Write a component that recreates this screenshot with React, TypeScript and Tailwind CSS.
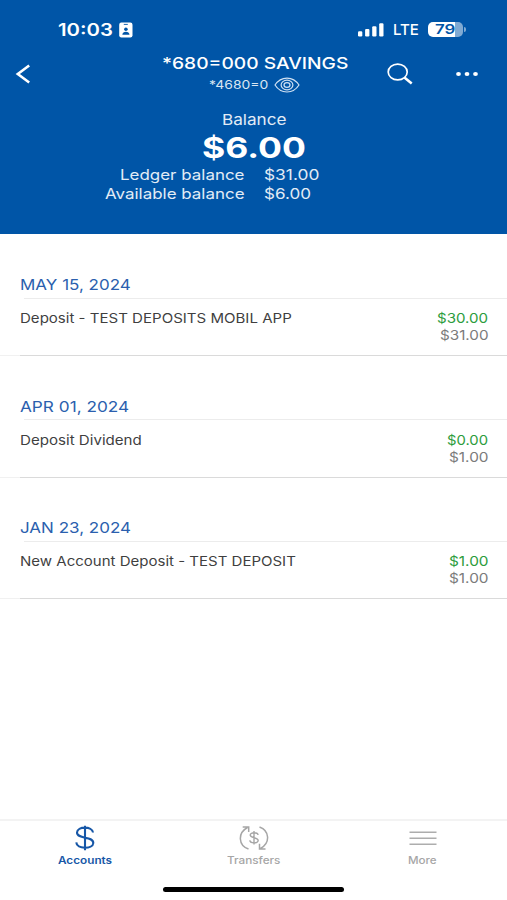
import { useLayoutEffect, useRef } from "react";
import type { ReactNode } from "react";

/* One line of extended type: stretched horizontally to fill the width of its box. */
function Wide({ className, children }: { className: string; children: ReactNode }) {
  const box = useRef<HTMLSpanElement>(null);
  const text = useRef<HTMLSpanElement>(null);
  useLayoutEffect(() => {
    if (box.current && text.current) {
      const ratio = box.current.clientWidth / text.current.offsetWidth;
      text.current.style.transform = `scaleX(${ratio})`;
    }
  }, []);
  return (
    <span ref={box} className={`block shrink-0 whitespace-nowrap ${className}`}>
      <span ref={text} className="inline-block origin-left">{children}</span>
    </span>
  );
}

const transactions = [
  { date: "MAY 15, 2024", dateW: "w-[111px]", text: "Deposit - TEST DEPOSITS MOBIL APP", textW: "w-[272px]", amount: "$30.00", amountW: "w-[51px]", balance: "$31.00", balanceW: "w-[48px]" },
  { date: "APR 01, 2024", dateW: "w-[109px]", text: "Deposit Dividend", textW: "w-[122px]", amount: "$0.00", amountW: "w-[41px]", balance: "$1.00", balanceW: "w-[39px]" },
  { date: "JAN 23, 2024", dateW: "w-[111px]", text: "New Account Deposit - TEST DEPOSIT", textW: "w-[276px]", amount: "$1.00", amountW: "w-[39px]", balance: "$1.00", balanceW: "w-[39px]" },
];

function StatusBar() {
  return (
    <div className="flex h-[53px] items-center pt-[6px] pl-[58px]">
      <Wide className="w-[55px] text-[17px] leading-[20px] font-semibold">10:03</Wide>
      <svg className="ml-[6px]" width="14" height="16" viewBox="0 0 14 16">
        <rect x="0.2" y="0.5" width="13.3" height="15" rx="2.2" fill="#fff" />
        <path d="M4.8 2.4h4" stroke="#0055a7" strokeWidth="0.9" />
        <circle cx="6.9" cy="7.3" r="1.8" fill="#0055a7" />
        <path d="M3.3 12.7c0-4 7.2-4 7.2 0z" fill="#0055a7" />
      </svg>
      <svg className="ml-[224px]" width="28" height="14" viewBox="0 0 28 14" fill="#fff">
        <rect x="1" y="8.2" width="4.3" height="5.3" rx="1.2" />
        <rect x="8.1" y="5.9" width="4.3" height="7.6" rx="1.2" />
        <rect x="15.2" y="3.2" width="4.3" height="10.3" rx="1.2" />
        <rect x="22.2" y="0.2" width="4.3" height="13.3" rx="1.2" />
      </svg>
      <Wide className="ml-[8px] w-[26px] text-[15px] leading-[20px] font-medium">LTE</Wide>
      <div className="ml-[9px] flex h-[15px] w-[35px] items-center overflow-hidden rounded-[5px] bg-[linear-gradient(90deg,#fff_78%,#80aad3_78%)] pl-[7px] text-[#0055a7]">
        <Wide className="w-[20px] text-[13.5px] leading-[15px] font-semibold">79</Wide>
      </div>
      <div className="ml-px h-[5px] w-[2px] rounded-r-full bg-[#80aad3]" />
    </div>
  );
}

function Header() {
  return (
    <header className="h-[234px] shrink-0 bg-[#0055a7] text-white">
      <StatusBar />
      <div className="flex h-[44px]">
        <svg className="mt-[11px] ml-[15px]" width="16" height="20" viewBox="0 0 16 20" fill="none" stroke="#fff" strokeWidth="2.6">
          <path d="M14.2 1.5L2.8 10l11.4 8.5" />
        </svg>
        <div className="ml-[131px] flex w-[186px] flex-col items-center">
          <Wide className="w-[186px] text-[16px] leading-[21px] font-medium">*680=000 SAVINGS</Wide>
          <div className="flex h-[22px] w-full items-center pl-[47px]">
            <Wide className="w-[59px] text-[12px] leading-[20px] text-[#d9e6f2]">*4680=0</Wide>
            <svg className="ml-[6px]" width="26" height="16" viewBox="0 0 26 16" fill="none" stroke="#d0e1f3" strokeWidth="1.2">
              <path d="M1 8C7-1.3 19-1.3 25 8C19 17.3 7 17.3 1 8z" />
              <ellipse cx="13" cy="8" rx="5.9" ry="4.8" />
              <ellipse cx="13" cy="8" rx="3" ry="2.4" />
            </svg>
          </div>
        </div>
        <svg className="mt-[10px] ml-[39px]" width="27" height="23" viewBox="0 0 27 23" fill="none" stroke="#fff">
          <ellipse cx="10.7" cy="9" rx="9.5" ry="7.9" strokeWidth="1.7" />
          <path d="M17.4 14.4l7.3 6" strokeWidth="2.6" />
        </svg>
        <svg className="mt-[18px] ml-[41px]" width="24" height="6" viewBox="0 0 24 6" fill="#fff">
          <ellipse cx="3.5" cy="3" rx="2.4" ry="2" />
          <ellipse cx="12" cy="3" rx="2.4" ry="2" />
          <ellipse cx="20.5" cy="3" rx="2.4" ry="2" />
        </svg>
      </div>
      <div className="flex flex-col items-center pt-[12px] pl-px">
        <Wide className="w-[64px] text-[15px] leading-[21px] text-[#e2ecf6]">Balance</Wide>
        <Wide className="w-[104px] text-[29px] leading-[35px] font-bold">$6.00</Wide>
      </div>
      <div className="text-[14.5px] leading-[19.4px] text-[#e2ecf6]">
        <div className="flex">
          <Wide className="ml-[119.5px] w-[124.5px]">Ledger balance</Wide>
          <Wide className="ml-[20px] w-[55px]">$31.00</Wide>
        </div>
        <div className="flex">
          <Wide className="ml-[105px] w-[139px]">Available balance</Wide>
          <Wide className="ml-[20px] w-[47px]">$6.00</Wide>
        </div>
      </div>
    </header>
  );
}

function TabBar() {
  return (
    <nav className="flex h-[60px] shrink-0 border-t-2 border-[#f3f3f3] text-[10px] leading-[12px] text-[#a6a6a6]">
      <div className="flex w-[169px] flex-col items-center pt-[4px] text-[#1757a7]">
        <svg width="22" height="26" viewBox="0 0 22 26" fill="none" stroke="#1757a7" strokeWidth="2.1">
          <path d="M19 7.5C18.5 1 3.2 1 3 7.5C3 14.5 19.3 10.8 19.3 18C19 24.5 2.5 24.5 2.3 17.4M11 .8v24.5" />
        </svg>
        <Wide className="mt-[3px] w-[54px] font-semibold">Accounts</Wide>
      </div>
      <div className="flex w-[169px] flex-col items-center pt-[4px]">
        <svg width="32" height="26" viewBox="0 0 32 26" fill="none" stroke="#a6a6a6" strokeWidth="1.5">
          <path d="M10.5 24C.2 20.3-.5 8 9.5 2.5M4.7 2h6v5M21.5 2c10.2 3.7 11 16 1 21.5M27.5 24h-6v-5.2" />
          <path d="M20 10c0-3-7.8-3-7.8 0c0 3.5 8 2 8 5.6c0 3.1-8.3 3-8.3-.3M16 6v13.5" strokeWidth="1.4" />
        </svg>
        <Wide className="mt-[3px] w-[54px] font-medium">Transfers</Wide>
      </div>
      <div className="flex w-[169px] flex-col items-center pt-[4px]">
        <svg width="28" height="26" viewBox="0 0 28 26" stroke="#adadad" strokeWidth="1.5">
          <path d="M.5 7.2h27M.5 13.2h27M.5 19.2h27" />
        </svg>
        <Wide className="mt-[3px] w-[29px] font-medium">More</Wide>
      </div>
    </nav>
  );
}

export default function App() {
  return (
    <div className="flex h-[900px] w-[507px] flex-col overflow-hidden bg-white font-['Inter','Liberation_Sans',sans-serif]">
      <Header />
      <main className="flex-1">
        {transactions.map((t) => (
          <section key={t.date} className="h-[121.6px] pt-[40px]">
            <div className="h-[23.5px] pl-[20px] text-[15px] leading-[21px] text-[#2b5fae]">
              <Wide className={t.dateW}>{t.date}</Wide>
            </div>
            <div className="ml-[24px] h-px bg-[#ececec]" />
            <div className="flex h-[56.5px] justify-between pt-[11.5px] pr-[19px] pl-[20px] text-[13px] leading-[17px] text-[#3f3f3f]">
              <Wide className={t.textW}>{t.text}</Wide>
              <div className="flex flex-col items-end">
                <Wide className={`text-[#2c9c3c] ${t.amountW}`}>{t.amount}</Wide>
                <Wide className={`text-[#7b7b7b] ${t.balanceW}`}>{t.balance}</Wide>
              </div>
            </div>
            <div className="flex h-px">
              <div className="w-[20px] bg-[#f1f1f1]" />
              <div className="flex-1 bg-[#dadada]" />
            </div>
          </section>
        ))}
      </main>
      <TabBar />
      <div className="flex h-[21px] shrink-0 items-center justify-center">
        <div className="h-[5px] w-[181px] rounded-full bg-black" />
      </div>
    </div>
  );
}
